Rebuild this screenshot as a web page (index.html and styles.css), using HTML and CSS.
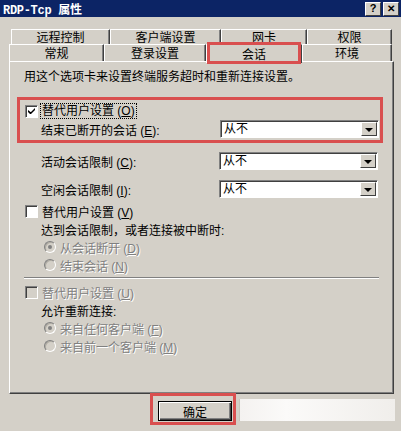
FILE: index.html
```html
<!DOCTYPE html>
<html lang="zh-CN">
<head>
    <meta charset="UTF-8">
    <title>RDP-Tcp 属性</title>
    <link rel="stylesheet" href="styles.css">
</head>
<body>
    <div class="window">
        <div class="titlebar">
            <span class="title">RDP-Tcp 属性</span>
            <span class="tb-btn">?</span>
            <span class="tb-btn close">✕</span>
        </div>

        <div class="tabs">
            <div class="tab-row back">
                <div class="tab" style="width: 99px">远程控制</div>
                <div class="tab" style="width: 111px">客户端设置</div>
                <div class="tab" style="width: 86px">网卡</div>
                <div class="tab" style="width: 85px">权限</div>
            </div>
            <div class="tab-row front">
                <div class="tab" style="width: 95px">常规</div>
                <div class="tab" style="width: 102px">登录设置</div>
                <div class="tab selected" style="width: 96px">会话</div>
                <div class="tab" style="width: 90px">环境</div>
            </div>
        </div>

        <div class="panel">
            <div class="intro">用这个选项卡来设置终端服务超时和重新连接设置。</div>

            <div class="group">
                <div class="check-row">
                    <span class="checkbox checked"><svg width="7" height="7" viewBox="0 0 7 7"><path d="M0 2 L0 4 L2 6 L3 6 L7 2 L7 0 L3 4 L2.5 4 Z" fill="#000"/></svg></span>
                    <span class="label focus">替代用户设置 (<u>O</u>)</span>
                </div>
                <div class="field-row">
                    <span class="label">结束已断开的会话 (<u>E</u>):</span>
                    <div class="select"><span class="value">从不</span><span class="arrow"></span></div>
                </div>
            </div>

            <div class="section">
                <div class="field-row first">
                    <span class="label">活动会话限制 (<u>C</u>):</span>
                    <div class="select"><span class="value">从不</span><span class="arrow"></span></div>
                </div>
                <div class="field-row second">
                    <span class="label">空闲会话限制 (<u>I</u>):</span>
                    <div class="select"><span class="value">从不</span><span class="arrow"></span></div>
                </div>

                <div class="check-row spaced">
                    <span class="checkbox"></span>
                    <span class="label">替代用户设置 (<u>V</u>)</span>
                </div>
                <div class="text-row">达到会话限制，或者连接被中断时:</div>
                <div class="radio-row disabled">
                    <span class="radio on"></span>
                    <span class="label">从会话断开 (<u>D</u>)</span>
                </div>
                <div class="radio-row disabled">
                    <span class="radio"></span>
                    <span class="label">结束会话 (<u>N</u>)</span>
                </div>

                <div class="separator"></div>

                <div class="check-row spaced disabled">
                    <span class="checkbox off"></span>
                    <span class="label">替代用户设置 (<u>U</u>)</span>
                </div>
                <div class="text-row">允许重新连接:</div>
                <div class="radio-row disabled">
                    <span class="radio on"></span>
                    <span class="label">来自任何客户端 (<u>F</u>)</span>
                </div>
                <div class="radio-row disabled">
                    <span class="radio"></span>
                    <span class="label">来自前一个客户端 (<u>M</u>)</span>
                </div>
            </div>
        </div>

        <div class="footer">
            <button class="btn default">确定</button>
            <div class="smear"></div>
        </div>
    </div>
</body>
</html>
```

FILE: styles.css
```css
* {
    margin: 0;
    padding: 0;
    box-sizing: border-box;
}

body {
    background-color: #d4d0c8;
    font-family: "Liberation Sans", "Noto Sans CJK SC", sans-serif;
    font-size: 12px;
    color: #000;
}

.window {
    width: 401px;
    height: 431px;
    background: #d4d0c8;
    overflow: hidden;
}

/* title bar */
.titlebar {
    display: flex;
    align-items: center;
    height: 17px;
    padding: 0 2px 0 3px;
    background: #0c2465;
}

.title {
    flex: 1;
    color: #fff;
    font-family: "Liberation Mono", "Noto Sans CJK SC", monospace;
    font-weight: bold;
    font-size: 12px;
    letter-spacing: -0.3px;
}

.tb-btn {
    display: flex;
    align-items: center;
    justify-content: center;
    width: 16px;
    height: 14px;
    margin-left: 2px;
    background: #d4d0c8;
    border: 1px solid;
    border-color: #fff #404040 #404040 #fff;
    font-weight: bold;
    font-size: 11px;
    line-height: 1;
}

.tb-btn.close {
    font-size: 10px;
}

/* tabs */
.tabs {
    padding-top: 12px;
}

.tab-row {
    display: flex;
}

.tab-row.back {
    padding-left: 11px;
    height: 15px;
}

.tab-row.front {
    padding-left: 9px;
    height: 17px;
}

.tab {
    position: relative;
    display: flex;
    align-items: center;
    justify-content: center;
    border-top: 1px solid #fff;
    border-left: 1px solid #fff;
    border-right: 1px solid #404040;
    box-shadow: inset -1px 0 #808080;
    line-height: 1;
    padding-top: 1px;
}

.tab-row.front .tab {
    padding-top: 2px;
}

.tab.selected {
    z-index: 1;
    margin-bottom: -2px;
    background: #d4d0c8;
}

.tab.selected::after {
    content: "";
    position: absolute;
    left: 0;
    right: 0;
    top: -3px;
    bottom: -1px;
    border: 3px solid #d94f4f;
}

/* main panel */
.panel {
    width: 385px;
    height: 333px;
    margin-left: 9px;
    border: 1px solid;
    border-color: #fff #404040 #404040 #fff;
    box-shadow: inset -1px -1px #808080;
}

.intro {
    margin-top: 6px;
    padding-left: 14px;
    height: 18px;
    line-height: 18px;
}

.group {
    width: 366px;
    margin: 11px 0 0 7px;
    padding: 2px 1px 2px 5px;
    border: 3px solid #d94f4f;
}

.section {
    margin: 0 15px 0 15px;
}

.check-row,
.field-row,
.text-row,
.radio-row {
    display: flex;
    align-items: center;
    height: 18px;
}

.check-row .label {
    margin-left: 3px;
    padding: 0 1px;
}

.label.focus {
    outline: 1px dotted #000;
    outline-offset: 0;
    line-height: 14px;
}

.field-row,
.text-row {
    padding-left: 16px;
}

.field-row.first {
    margin-top: 9px;
}

.field-row.second {
    margin-top: 10px;
}

.check-row.spaced {
    margin-top: 4px;
}

.radio-row {
    padding-left: 19px;
}

.radio-row .label {
    margin-left: 4px;
}

.disabled .label {
    color: #808080;
    text-shadow: 1px 1px 0 #fff;
}

u {
    text-underline-offset: 1px;
}

/* controls */
.select {
    display: flex;
    align-items: center;
    width: 159px;
    height: 18px;
    margin-left: auto;
    background: #fff;
    border: 1px solid;
    border-color: #808080 #fff #fff #808080;
    box-shadow: inset 1px 1px #404040;
}

.select .value {
    flex: 1;
    padding-left: 3px;
    line-height: 1;
}

.arrow {
    display: flex;
    align-items: center;
    justify-content: center;
    width: 16px;
    height: 14px;
    margin-right: 1px;
    background: #d4d0c8;
    border: 1px solid;
    border-color: #fff #404040 #404040 #fff;
}

.arrow::after {
    content: "";
    border-top: 4px solid #000;
    border-left: 4px solid transparent;
    border-right: 4px solid transparent;
    margin-top: 1px;
}

.checkbox {
    display: flex;
    align-items: center;
    justify-content: center;
    width: 13px;
    height: 13px;
    background: #fff;
    border: 1px solid;
    border-color: #808080 #fff #fff #808080;
    box-shadow: inset 1px 1px #404040;
}

.checkbox.off {
    background: #d4d0c8;
}

.radio {
    position: relative;
    width: 12px;
    height: 12px;
    border-radius: 50%;
    background: #d4d0c8;
    border: 1px solid;
    border-color: #808080 #fff #fff #808080;
    box-shadow: inset 1px 1px #b0aca4;
}

.radio.on::after {
    content: "";
    position: absolute;
    left: 3px;
    top: 3px;
    width: 4px;
    height: 4px;
    border-radius: 50%;
    background: #808080;
}

.separator {
    margin: 3px 0 0 -1px;
    width: 355px;
    border-top: 1px solid #808080;
    border-bottom: 1px solid #fff;
}

/* footer */
.footer {
    display: flex;
    padding: 7px 0 0 158px;
}

.btn {
    position: relative;
    width: 74px;
    height: 20px;
    font-family: inherit;
    font-size: 12px;
    background: #d4d0c8;
    border: 1px solid #000;
    box-shadow: inset 1px 1px #fff, inset -1px -1px #404040, inset -2px -2px #808080;
}

.btn::after {
    content: "";
    position: absolute;
    left: -9px;
    right: -5px;
    top: -9px;
    bottom: -5px;
    border: 3px solid #d94f4f;
}

.smear {
    width: 156px;
    height: 22px;
    margin: -2px 0 0 7px;
    background: linear-gradient(to right, #f4f2f0, #fbfaf9 30%, #f0eeeb);
    border-left: 1px solid #c8c4bc;
}
```
